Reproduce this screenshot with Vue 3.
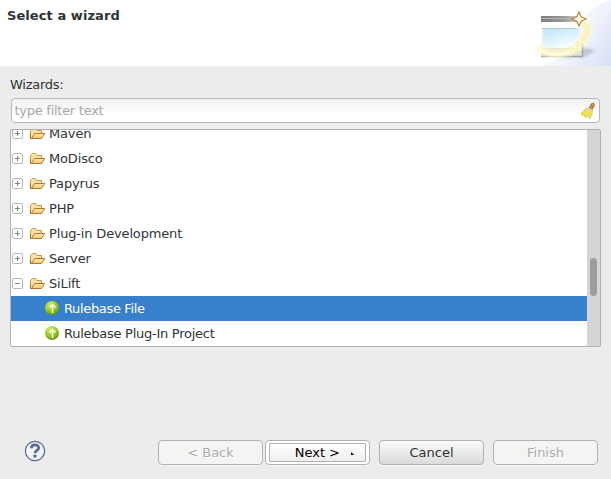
<script setup>
const folders = [
  { name: 'Maven' },
  { name: 'MoDisco' },
  { name: 'Papyrus' },
  { name: 'PHP' },
  { name: 'Plug-in Development' },
  { name: 'Server' },
  {
    name: 'SiLift',
    open: true,
    items: [{ name: 'Rulebase File', selected: true }, { name: 'Rulebase Plug-In Project' }],
  },
]
</script>

<template>
  <div class="dialog">
    <header class="header">
      <h1>Select a wizard</h1>
      <svg class="banner" width="91" height="66" viewBox="0 0 91 66">
        <defs>
          <linearGradient id="sweep" x1="0" y1="0" x2="1" y2="1">
            <stop offset="0" stop-color="#f8faff" />
            <stop offset="1" stop-color="#e6edf9" />
          </linearGradient>
          <linearGradient id="sweep2" gradientUnits="userSpaceOnUse" x1="25" y1="20" x2="91" y2="66">
            <stop offset="0" stop-color="#fff" />
            <stop offset="0.5" stop-color="#f0f4fc" />
            <stop offset="1" stop-color="#d6dff5" />
          </linearGradient>
          <linearGradient id="bar" x1="0" y1="0" x2="1" y2="0">
            <stop offset="0" stop-color="#7b7b7b" />
            <stop offset="0.6" stop-color="#9b9b9b" />
            <stop offset="1" stop-color="#d2d2d0" />
          </linearGradient>
          <linearGradient id="pane" x1="0.2" y1="0" x2="0.7" y2="1">
            <stop offset="0" stop-color="#bfe6f9" />
            <stop offset="0.6" stop-color="#e3f5fd" />
            <stop offset="1" stop-color="#fafeff" />
          </linearGradient>
          <linearGradient id="frame" x1="0" y1="0" x2="0" y2="1">
            <stop offset="0" stop-color="#fff" />
            <stop offset="0.7" stop-color="#f5f5ee" />
            <stop offset="1" stop-color="#d9d9cd" />
          </linearGradient>
          <linearGradient id="edge" x1="0" y1="0" x2="0" y2="1">
            <stop offset="0" stop-color="#777" />
            <stop offset="1" stop-color="#aaa" />
          </linearGradient>
          <filter id="soft" x="-30%" y="-30%" width="160%" height="160%"><feGaussianBlur stdDeviation="1.6" /></filter>
          <filter id="fine" x="-10%" y="-10%" width="120%" height="120%"><feGaussianBlur stdDeviation=".5" /></filter>
        </defs>
        <path d="M20 66C40 62 56 44 63 26C70 14 82 9 91 8V66Z" fill="url(#sweep2)" />
        <path d="M91 0V9C80 11 70 15 62 23C67 12 78 3 91 0Z" fill="url(#sweep)" />
        <path d="M36 57L64 48L76 50L65 57Z" fill="#a5abc0" opacity=".6" filter="url(#soft)" />
        <g filter="url(#fine)">
          <rect x="21" y="16" width="42" height="41" fill="url(#frame)" />
          <rect x="21" y="16" width="38" height="6" fill="url(#bar)" />
          <path d="M21 18.500H55" stroke="#b5b5b5" />
          <rect x="22" y="22" width="40" height="6" fill="#fff" />
          <rect x="23" y="28" width="37" height="20" fill="url(#pane)" />
          <path d="M22 28.500H56" stroke="#b5c8ce" />
          <path d="M23 48H58L52 53H23Z" fill="#e2e1d3" />
          <path d="M21.500 20V56.500" fill="none" stroke="url(#edge)" />
          <path d="M21 56.500H62.500V40" fill="none" stroke="#a0a39d" stroke-width="1.400" />
        </g>
        <path d="M19 48C29 57 48 56 59 45C66 38 69 31 66 22" fill="none" stroke="#fdfad0" stroke-width="8" opacity=".85" filter="url(#soft)" />
        <path d="M18 47C29 57 45 56 57 47C65 40 70 32 68 23" fill="none" stroke="#faf5b5" stroke-width="3" opacity=".65" filter="url(#soft)" />
        <path d="M19 49C28 56 42 56 52 50" fill="none" stroke="#fffee8" stroke-width="2.500" opacity=".8" />
        <path d="M65 23l1 2 2 1-2 1-1 2-1-2-2-1 2-1ZM67 29l1 2 2 1-2 1-1 2-1-2-2-1 2-1ZM64 35l1 2 2 1-2 1-1 2-1-2-2-1 2-1ZM58 41l1 2 2 1-2 1-1 2-1-2-2-1 2-1ZM51 47l1 1 2 1-2 1-1 2-1-2-2-1 2-1Z" fill="#fff9c8" stroke="#f5dd98" stroke-width=".6" opacity=".8" />
        <path d="M59 12L61.200 16.800L66 19L61.200 21.200L59 26L56.800 21.200L52 19L56.800 16.800Z" fill="#fffdf0" stroke="#b88a3c" stroke-width="1.300" />
      </svg>
    </header>

    <main class="content">
      <label class="caption">Wizards:</label>
      <div class="filter">
        <span>type filter text</span>
        <svg width="16" height="18" viewBox="0 0 16 18">
          <path d="M9 6L11.500 1.500Q13.500 .3 14.500 2Q14.500 4 12 8Z" fill="#b57f3c" stroke="#8f6430" stroke-width=".7" />
          <path d="M12 2l2 1M10.500 4.500l2 1.500" stroke="#e0b266" />
          <path d="M6 6Q3 10 .7 12L3 13.500L4 13L5.500 15.500L7.500 14.500L10 16.500Q12 13 12.500 9Z" fill="#ecdc44" stroke="#cdbb3a" stroke-width=".7" />
          <path d="M7 8Q5 11 3 12.500M9 9Q8 12 6 14.500M11 10L9.500 15" fill="none" stroke="#f8ef85" stroke-width=".8" />
          <path d="M7 5L13 8L12 10L5.500 7Z" fill="#e0d6c6" />
        </svg>
      </div>

      <div class="tree">
        <div class="rows">
          <template v-for="f in folders" :key="f.name">
            <div class="row">
              <svg class="expander" width="11" height="11" viewBox="0 0 11 11">
                <rect x=".5" y=".5" width="10" height="10" rx="1.500" fill="#fff" stroke="#b8b8b8" />
                <path :d="f.open ? 'M3 5.500H8' : 'M3 5.500H8M5.500 3V8'" stroke="#828484" />
              </svg>
              <svg class="folder" width="16" height="11" viewBox="0 0 16 11">
                <defs>
                  <linearGradient id="flap" x1="0" y1="0" x2="0" y2="1">
                    <stop offset="0" stop-color="#ffedb4" />
                    <stop offset="1" stop-color="#f6c76a" />
                  </linearGradient>
                </defs>
                <path d="M.5 9.500V2.500L2.500 .5H5.500L7 2.500H11.500V5" fill="#fbe3a8" stroke="#c8944a" />
                <path d="M1.500 10.500L4.500 5.500H14.700L11.500 10.500Z" fill="url(#flap)" stroke="#b8752a" stroke-linejoin="round" />
                <path d="M.5 7V10.500H2" fill="none" stroke="#a9651c" />
              </svg>
              <span>{{ f.name }}</span>
            </div>
            <div v-for="item in f.items" :key="item.name" class="row child" :class="{ selected: item.selected }">
              <svg class="rule" width="15" height="15" viewBox="0 0 15 15">
                <defs>
                  <radialGradient id="ball" cx=".38" cy=".25" r=".8">
                    <stop offset="0" stop-color="#d3ec65" />
                    <stop offset=".55" stop-color="#9aca25" />
                    <stop offset="1" stop-color="#5d9410" />
                  </radialGradient>
                </defs>
                <circle cx="7" cy="7" r="7" fill="url(#ball)" />
                <path d="M7.500 12V3.500M4.500 6.500L7.500 3.500L10.500 6.500" fill="none" stroke="#fbffe9" stroke-width="1.500" />
              </svg>
              <span>{{ item.name }}</span>
            </div>
          </template>
        </div>
        <div class="scrollbar"><div class="thumb"></div></div>
      </div>
    </main>

    <footer class="footer">
      <svg class="help" width="22" height="22" viewBox="0 0 22 22">
        <circle cx="11" cy="11" r="9.700" fill="#f1f3f5" stroke="#566c92" stroke-width="1.200" />
        <path d="M7.300 8.300C7.300 3.700 14.700 3.900 14.700 7.700C14.700 10.300 11 10.400 11 13.300" fill="none" stroke="#566c92" stroke-width="2.700" />
        <rect x="9.500" y="14.700" width="3" height="2.800" rx=".6" fill="#566c92" />
      </svg>
      <button class="btn disabled">&lt; Back</button>
      <button class="btn focused">
        <span class="ring">Next &gt;
          <svg class="pointer" width="6" height="8" viewBox="0 0 6 8">
            <path d="M0 0L6 6L3 6Z" fill="#e3e3e3" />
            <path d="M1 3L4 6H1Z" fill="#000" />
          </svg>
        </span>
      </button>
      <button class="btn cancel">Cancel</button>
      <button class="btn disabled finish">Finish</button>
    </footer>
  </div>
</template>

<style>
body {
  margin: 0;
  background: #ececec;
}
</style>

<style scoped>
.dialog {
  width: 611px;
  height: 479px;
  display: flex;
  flex-direction: column;
  overflow: hidden;
  background: #ececec;
  color: #2e3436;
  font: 13px/25px "DejaVu Sans", sans-serif;
}
.header {
  height: 66px;
  flex: none;
  display: flex;
  justify-content: space-between;
  background: #fff;
}
h1 {
  margin: 3px 0 0 7px;
  font-size: 13px;
  line-height: 25px;
  font-weight: bold;
  letter-spacing: 0.07px;
}
.banner { display: block; }
.content {
  display: flex;
  flex-direction: column;
  padding: 6px 10px 0;
}
.caption {
  height: 26px;
  letter-spacing: -0.27px;
}
.filter {
  display: flex;
  align-items: center;
  justify-content: space-between;
  box-sizing: border-box;
  height: 25px;
  margin: 0 1px;
  padding: 0 3px 0 2.500px;
  border: 1px solid #b5b5b5;
  border-radius: 4px;
  background: linear-gradient(#f1f1f1, #fff 70%);
  color: #a8a8a8;
  letter-spacing: -0.27px;
}
.tree {
  display: flex;
  box-sizing: border-box;
  height: 218px;
  margin-top: 6px;
  border: 1px solid #b2b2b2;
  border-radius: 2px;
  background: #fff;
  overflow: hidden;
}
.rows {
  flex: 1;
  margin-top: -9px;
}
.row {
  display: flex;
  align-items: center;
  height: 25px;
  padding-left: 1px;
  letter-spacing: -0.16px;
}
.expander { margin-right: 7px; }
.folder { margin-right: 3px; }
.child {
  padding-left: 34px;
  letter-spacing: -0.26px;
}
.rule { margin-right: 4px; }
.selected {
  background: #3880cc;
  color: #fff;
  letter-spacing: -0.34px;
}
.scrollbar {
  width: 13px;
  background: #d5d5d5;
}
.thumb {
  width: 7px;
  height: 38px;
  margin: 128px auto 0;
  border-radius: 4px;
  background: #9c9d9d;
}
.footer {
  display: flex;
  margin-top: 93px;
  padding-left: 24px;
}
.help { margin-right: 112px; }
.btn {
  box-sizing: border-box;
  width: 105px;
  height: 25px;
  margin: 0 2px 0 0;
  padding: 0;
  border: 1px solid #b2b2b2;
  border-radius: 4px;
  background: linear-gradient(#fcfcfc, #d9d9d9);
  box-shadow: 0 1px #f6f6f6;
  color: #2e3436;
  font: inherit;
  line-height: 23px;
  text-align: center;
}
.disabled {
  background: #f4f4f2;
  color: #a9acac;
  text-shadow: 1px 1px #fff;
}
.focused {
  padding: 2px 3px;
  background: #fff;
  color: #000;
}
.ring {
  display: flex;
  align-items: center;
  justify-content: flex-end;
  box-sizing: border-box;
  height: 19px;
  padding-right: 9px;
  border: 1px solid #b2b2b2;
  border-radius: 1px;
  background: linear-gradient(#fff, #ededed);
}
.pointer { margin-left: 10px; }
.cancel { margin-left: 7px; }
.finish { margin-left: 7px; }
</style>
